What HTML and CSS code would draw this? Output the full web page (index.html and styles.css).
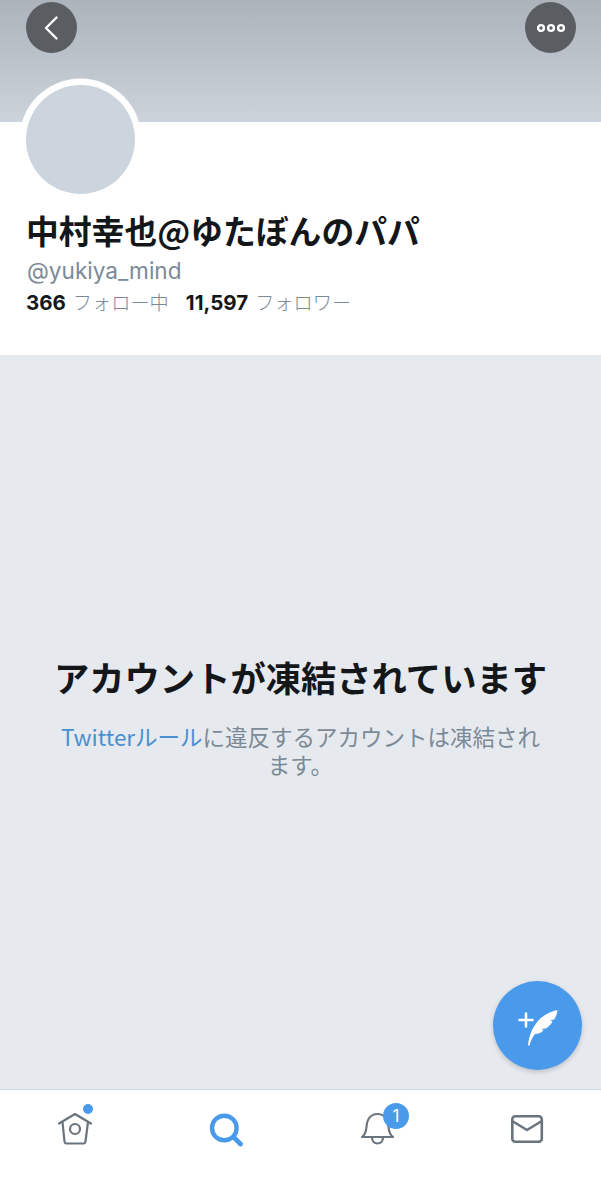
FILE: index.html
```html
<!DOCTYPE html>
<html lang="ja">
<head>
<meta charset="utf-8">
<title>中村幸也@ゆたぼんのパパ</title>
<link rel="stylesheet" href="styles.css">
</head>
<body>
<div class="page">
  <header class="banner">
    <button class="round-btn" aria-label="戻る">
      <svg width="18" height="26" viewBox="0 0 18 26"><path d="M13.500 2.500 3 13l10.500 10.500" fill="none" stroke="#fff" stroke-width="2.400" stroke-linecap="round" stroke-linejoin="round"/></svg>
    </button>
    <button class="round-btn" aria-label="その他">
      <svg width="30" height="10" viewBox="0 0 30 10"><g fill="none" stroke="#fff" stroke-width="2.400"><circle cx="5" cy="5" r="2.900"/><circle cx="15" cy="5" r="2.900"/><circle cx="25" cy="5" r="2.900"/></g></svg>
    </button>
  </header>
  <section class="profile">
    <div class="avatar"></div>
    <h1 class="name">中村幸也@ゆたぼんのパパ</h1>
    <div class="handle">@yukiya_mind</div>
    <div class="stats">
      <span class="stat"><b>366</b><span class="label">フォロー中</span></span>
      <span class="stat"><b>11,597</b><span class="label">フォロワー</span></span>
    </div>
  </section>
  <main class="suspended">
    <h2 class="title">アカウントが凍結されています</h2>
    <p class="desc"><span class="link">Twitterルール</span>に違反するアカウントは凍結されます。</p>
    <button class="fab" aria-label="ツイート">
      <svg width="44" height="44" viewBox="0 0 44 44">
        <path d="M3.500 16h13M10 9.500v13" stroke="#fff" stroke-width="2.600" stroke-linecap="round" fill="none"/>
        <path d="M12 41.500C13 32 16 24 22 17 27 11 34 8 41.500 6 41 10 40 13 38 15.500L34 16.500 36.500 17.500C35 20.500 32.500 23 29.500 24.500L26 25 27.500 26.500C25 29 22 30 19 30 16.500 33 14.500 37 13.500 41.500Z" fill="#fff"/>
      </svg>
    </button>
  </main>
  <nav class="tabbar">
    <a class="tab">
      <svg width="38" height="38" viewBox="0 0 38 38"><g fill="none" stroke="#69747e" stroke-width="2.200" stroke-linejoin="round" stroke-linecap="round"><path d="M3 14.500 19 5 35 14.500"/><path d="M6.500 13 8.500 32.500Q8.700 34.500 10.500 34.500H27.500Q29.300 34.500 29.500 32.500L32 13"/><circle cx="19" cy="20" r="5"/></g></svg>
      <span class="dot"></span>
    </a>
    <a class="tab">
      <svg width="38" height="38" viewBox="0 0 38 38"><g fill="none" stroke="#4a9aeb" stroke-linecap="round"><circle cx="18.300" cy="19" r="12.300" stroke-width="4.400"/><path d="M28 28.500 34.500 35" stroke-width="4.800"/></g></svg>
    </a>
    <a class="tab">
      <svg width="38" height="38" viewBox="0 0 38 38"><g fill="none" stroke="#69747e" stroke-width="2.200" stroke-linejoin="round" stroke-linecap="round"><path d="M5 28H36C33 26 32 23 31.500 18 31 10 27 5 20.500 5S10 10 9.500 18C9 23 8 26 5 28Z"/><path d="M15 28.500C15 32.500 17.500 34.500 20.500 34.500S26 32.500 26 28.500"/></g></svg>
      <span class="badge">1</span>
    </a>
    <a class="tab">
      <svg width="38" height="38" viewBox="0 0 38 38"><g fill="none" stroke="#69747e" stroke-width="2.600" stroke-linejoin="round" stroke-linecap="round"><rect x="5.300" y="7.300" width="29.500" height="25.500" rx="3"/><path d="M6 12.500 20 21l14-8.500"/></g></svg>
    </a>
  </nav>
</div>
</body>
</html>
```
FILE: styles.css
```css
* { box-sizing: border-box; }
html, body { margin: 0; padding: 0; }
body {
  font-family: "Noto Sans CJK JP", "Liberation Sans", sans-serif;
  background: #fff;
}
.page {
  width: 601px;
  height: 1200px;
  display: flex;
  flex-direction: column;
  overflow: hidden;
}
.banner {
  height: 122px;
  flex: none;
  padding: 2px 25px 0 26px;
  display: flex;
  justify-content: space-between;
  align-items: flex-start;
  background: linear-gradient(#adb3ba, #ccd3da);
}
.round-btn {
  width: 51px;
  height: 51px;
  border: 0;
  padding: 0;
  border-radius: 50%;
  background: #5a5e62;
  display: flex;
  align-items: center;
  justify-content: center;
}
.profile {
  height: 233px;
  flex: none;
  padding-left: 27px;
  background: #fff;
}
.avatar {
  width: 109px;
  height: 109px;
  margin: -37px 0 0 -1px;
  border-radius: 50%;
  background: #ccd5de;
  box-shadow: 0 0 0 6.500px #fff;
  position: relative;
}
.name {
  margin: 16px 0 0 -1px;
  font-size: 32.800px;
  line-height: 40px;
  font-weight: 700;
  color: #14171a;
  white-space: nowrap;
}
.handle {
  margin-top: 7px;
  font-family: "Inter", "Liberation Sans", sans-serif;
  font-size: 22.600px;
  line-height: 28px;
  color: #7b8a97;
}
.stats {
  margin: 4px 0 0 -1px;
  display: flex;
  gap: 17px;
  font-size: 20px;
  line-height: 26px;
}
.stat b {
  font-family: "Inter", "Liberation Sans", sans-serif;
  font-weight: 700;
  font-size: 20.500px;
  color: #14171a;
}
.label {
  margin-left: 7px;
  font-size: 19.200px;
  font-weight: 300;
  color: #7b8a97;
}
.suspended {
  flex: 1;
  position: relative;
  background: #e6e9ee;
  padding: 296px 57px 0;
  text-align: center;
}
.title {
  margin: 0 -10px;
  font-size: 35.300px;
  line-height: 52px;
  font-weight: 700;
  color: #14171a;
  white-space: nowrap;
}
.desc {
  margin: 19px -1px 0;
  font-size: 22.500px;
  line-height: 28px;
  color: #7b8a97;
}
.link {
  color: #4a90d0;
}
.fab {
  position: absolute;
  left: 493px;
  top: 626px;
  width: 89px;
  height: 89px;
  padding: 0;
  border: 0;
  border-radius: 50%;
  background: #4a9aeb;
  box-shadow: 0 2px 5px rgba(0, 0, 0, 0.18);
  display: flex;
  align-items: center;
  justify-content: center;
}
.tabbar {
  height: 111px;
  flex: none;
  display: flex;
  padding: 19px 0 0 0;
  justify-content: space-around;
  align-items: flex-start;
  background: #fff;
  border-top: 1px solid #cfd6dd;
}
.tab {
  position: relative;
  width: 38px;
  height: 38px;
  display: block;
}
.dot {
  position: absolute;
  left: 27px;
  top: -5px;
  width: 10px;
  height: 10px;
  border-radius: 50%;
  background: #4a9aeb;
}
.badge {
  position: absolute;
  left: 26.400px;
  top: -6px;
  width: 26px;
  height: 26px;
  border-radius: 50%;
  background: #4a9aeb;
  color: #fff;
  font-family: "Inter", "Liberation Sans", sans-serif;
  font-size: 17px;
  line-height: 26px;
  text-align: center;
}
```
